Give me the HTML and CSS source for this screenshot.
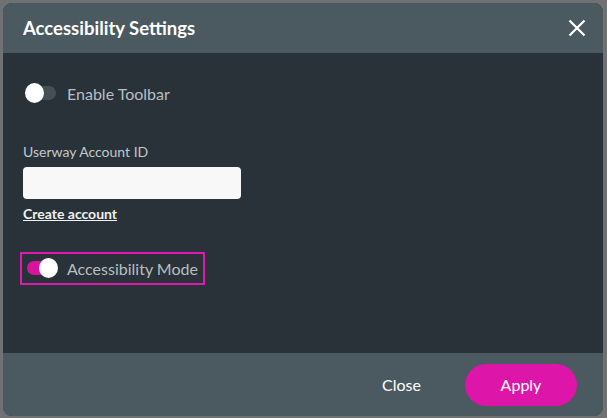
FILE: index.html
```html
<!DOCTYPE html>
<html lang="en">
<head>
  <meta charset="UTF-8">
  <title>Accessibility Settings</title>
  <link rel="stylesheet" href="styles.css">
</head>
<body>
  <div class="dialogo">
    <div class="cabecera">
      <h2>Accessibility Settings</h2>
      <svg class="cerrar" width="18" height="18" viewBox="0 0 18 18">
        <path d="M1.5 1.5 L16.5 16.5 M16.5 1.5 L1.5 16.5" stroke="#fff" stroke-width="2.2" fill="none"/>
      </svg>
    </div>

    <div class="cuerpo">
      <div class="fila">
        <span class="toggle">
          <span class="pista"></span>
          <span class="bola"></span>
        </span>
        <span class="texto">Enable Toolbar</span>
      </div>

      <label class="etiqueta">Userway Account ID</label>
      <input type="text" class="campo">
      <a href="#" class="enlace">Create account</a>

      <div class="fila marcada">
        <span class="toggle on">
          <span class="pista"></span>
          <span class="bola"></span>
        </span>
        <span class="texto">Accessibility Mode</span>
      </div>
    </div>

    <div class="pie">
      <button class="btn-cerrar">Close</button>
      <button class="btn-aplicar">Apply</button>
    </div>
  </div>
</body>
</html>
```

FILE: styles.css
```css
body {
  margin: 0;
  background: #6f7173;
  font-family: 'Lato', 'Open Sans', sans-serif;
  height: 418px;
  overflow: hidden;
}

.dialogo {
  margin: 3px 0 0 3px;
  width: 600px;
  height: 413px;
  border-radius: 9px;
  overflow: hidden;
  display: flex;
  flex-direction: column;
  background: #283238;
}

.cabecera {
  height: 50px;
  background: #4b5960;
  display: flex;
  align-items: center;
  justify-content: space-between;
  padding: 0 17px 0 20px;
}

.cabecera h2 {
  margin: 0;
  color: #fff;
  font-size: 18.5px;
  font-weight: 700;
}

.cuerpo {
  flex: 1;
  padding: 30px 20px 0 20px;
  display: flex;
  flex-direction: column;
  align-items: flex-start;
}

.fila {
  display: flex;
  align-items: center;
  gap: 10px;
}

.toggle {
  position: relative;
  width: 34px;
  height: 20px;
  display: inline-block;
}

.pista {
  position: absolute;
  left: 6px;
  top: 3px;
  width: 27px;
  height: 14px;
  border-radius: 7px;
  background: #454f56;
}

.bola {
  position: absolute;
  left: 2px;
  top: 0;
  width: 19px;
  height: 20px;
  border-radius: 50%;
  background: #fff;
}

.toggle.on .pista {
  left: 0;
  width: 28px;
  background: #d9139f;
}

.toggle.on .bola {
  left: 12px;
}

.texto {
  color: #b9bec2;
  font-size: 16px;
}

.etiqueta {
  margin-top: 40px;
  color: #c4c8cb;
  font-size: 14px;
}

.campo {
  margin-top: 7px;
  width: 218px;
  height: 32px;
  box-sizing: border-box;
  border: none;
  border-radius: 4px;
  background: #f8f8f8;
}

.enlace {
  margin-top: 6px;
  color: #f0f0f0;
  font-size: 14px;
  font-weight: 700;
  text-decoration: underline;
}

.marcada {
  margin-top: 30px;
  margin-left: -3px;
  border: 2px solid #e01ab0;
  padding: 4px 5px 5px 5px;
  gap: 6px;
}

.pie {
  height: 63px;
  background: #4b5960;
  display: flex;
  align-items: center;
  justify-content: flex-end;
  gap: 24px;
  padding-right: 26px;
}

.btn-cerrar {
  background: none;
  border: none;
  color: #fff;
  font-family: inherit;
  font-size: 16px;
  padding: 0 20px;
}

.btn-aplicar {
  background: #dd16a9;
  border: none;
  border-radius: 21px;
  color: #fff;
  font-family: inherit;
  font-size: 16px;
  width: 112px;
  height: 42px;
}
```
